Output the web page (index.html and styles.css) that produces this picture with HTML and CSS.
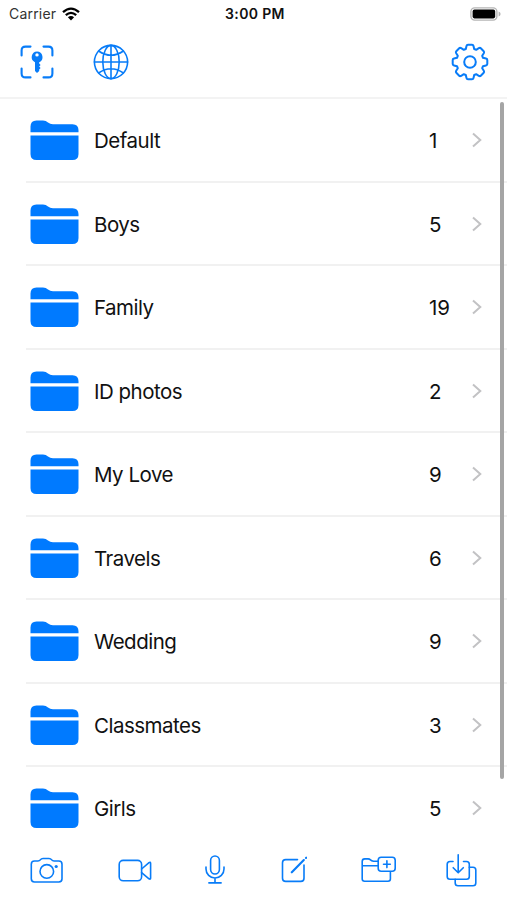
FILE: index.html
```html
<!DOCTYPE html>
<html lang="en">
<head>
<title>Folders</title>
	<meta charset="utf-8">
	<meta name="viewport" content="width=device-width, initial-scale=1.0">
	<link rel="stylesheet" href="styles.css">
</head>

<body>
<svg class="defs" width="0" height="0">
	<symbol id="folder" viewBox="0 0 49 40">
		<path d="M.5 12.3V6.5Q.5 .5 6.5 .5H13Q16 .5 18 2.5Q20 4.2 23 4.2H42.5Q48.5 4.2 48.5 10.2V12.3Z"/>
		<path d="M.5 15.5H48.5V34Q48.5 40 42.5 40H6.5Q.5 40 .5 34Z"/>
	</symbol>
	<symbol id="arrow" viewBox="0 0 10 16">
		<path d="M1 1.5L8.3 8L1 14.5"/>
	</symbol>
</svg>
<div class="wrapper">
	<div class="status">
		<div class="carrier">
			<span>Carrier</span>
			<svg width="18" height="14" viewBox="0 0 18 14">
				<path class="wave" d="M1 5.2Q9 -2 17 5.2M3.8 8.2Q9 3.6 14.2 8.2"/>
				<path d="M9 13.4L5.9 10.3Q9 7.9 12.1 10.3Z"/>
			</svg>
		</div>
		<div class="time">3:00 PM</div>
		<svg class="battery" width="31" height="14" viewBox="0 0 31 14">
			<rect class="case" x=".9" y=".9" width="26" height="12.2" rx="3.8"/>
			<rect x="2.6" y="2.6" width="22.6" height="8.8" rx="1.8"/>
			<path class="cap" d="M28.6 4.6Q30.6 5.4 30.6 7T28.6 9.4Z"/>
		</svg>
	</div>

	<header id="header">
		<svg class="icon" width="34" height="34" viewBox="0 0 34 34">
			<path class="thick" d="M1.6 10.5V5.5Q1.6 1.6 5.5 1.6H10.5M23.5 1.6H28.5Q32.4 1.6 32.4 5.5V10.5M32.4 23.5V28.5Q32.4 32.4 28.5 32.4H23.5M10.5 32.4H5.5Q1.6 32.4 1.6 28.5V23.5"/>
			<path class="fill" fill-rule="evenodd" d="M17 6.5A5.6 5.6 0 0 1 19.2 17.2V18.6L20.6 20L19.2 21.4L20.6 23L19.2 24.6V26L17 28L15 26V17.2A5.6 5.6 0 0 1 17 6.5ZM17 8.2A1.7 1.7 0 1 0 17 11.6A1.7 1.7 0 1 0 17 8.2Z"/>
		</svg>
		<svg class="icon globe" width="36" height="36" viewBox="0 0 36 36">
			<circle cx="18" cy="18" r="16.6"/>
			<ellipse cx="18" cy="18" rx="8.2" ry="16.6"/>
			<path d="M18 1.4V34.6M1.4 18H34.6M5.6 7Q18 15.5 30.4 7M5.6 29Q18 20.5 30.4 29"/>
		</svg>
		<svg class="icon gear" width="38" height="38" viewBox="-19 -19 38 38">
			<path d="M-4.2 -13L-3.5 -16Q-3.2 -17.3 -2 -17.3H2Q3.2 -17.3 3.5 -16L4.2 -13L6.2 -12.2L8.8 -13.8Q10 -14.5 10.8 -13.7L13.7 -10.8Q14.5 -10 13.8 -8.8L12.2 -6.2L13 -4.2L16 -3.5Q17.3 -3.2 17.3 -2V2Q17.3 3.2 16 3.5L13 4.2L12.2 6.2L13.8 8.8Q14.5 10 13.7 10.8L10.8 13.7Q10 14.5 8.8 13.8L6.2 12.2L4.2 13L3.5 16Q3.2 17.3 2 17.3H-2Q-3.2 17.3 -3.5 16L-4.2 13L-6.2 12.2L-8.8 13.8Q-10 14.5 -10.8 13.7L-13.7 10.8Q-14.5 10 -13.8 8.8L-12.2 6.2L-13 4.2L-16 3.5Q-17.3 3.2 -17.3 2V-2Q-17.3 -3.2 -16 -3.5L-13 -4.2L-12.2 -6.2L-13.8 -8.8Q-14.5 -10 -13.7 -10.8L-10.8 -13.7Q-10 -14.5 -8.8 -13.8L-6.2 -12.2Z"/>
			<circle cx="0" cy="0" r="5.8"/>
		</svg>
	</header>

	<main id="list">
		<ul>
			<li><svg class="folder"><use href="#folder"/></svg><span class="name">Default</span><span class="count">1</span><svg class="arrow"><use href="#arrow"/></svg></li>
			<li><svg class="folder"><use href="#folder"/></svg><span class="name">Boys</span><span class="count">5</span><svg class="arrow"><use href="#arrow"/></svg></li>
			<li><svg class="folder"><use href="#folder"/></svg><span class="name">Family</span><span class="count">19</span><svg class="arrow"><use href="#arrow"/></svg></li>
			<li><svg class="folder"><use href="#folder"/></svg><span class="name">ID photos</span><span class="count">2</span><svg class="arrow"><use href="#arrow"/></svg></li>
			<li><svg class="folder"><use href="#folder"/></svg><span class="name">My Love</span><span class="count">9</span><svg class="arrow"><use href="#arrow"/></svg></li>
			<li><svg class="folder"><use href="#folder"/></svg><span class="name">Travels</span><span class="count">6</span><svg class="arrow"><use href="#arrow"/></svg></li>
			<li><svg class="folder"><use href="#folder"/></svg><span class="name">Wedding</span><span class="count">9</span><svg class="arrow"><use href="#arrow"/></svg></li>
			<li><svg class="folder"><use href="#folder"/></svg><span class="name">Classmates</span><span class="count">3</span><svg class="arrow"><use href="#arrow"/></svg></li>
			<li><svg class="folder"><use href="#folder"/></svg><span class="name">Girls</span><span class="count">5</span><svg class="arrow"><use href="#arrow"/></svg></li>
		</ul>
		<div class="scrollbar"></div>
	</main>

	<footer id="footer">
		<!-- camera -->
		<svg class="icon" width="34" height="36" viewBox="0 0 34 36">
			<path d="M4.5 8H8Q9.5 8 10.3 6.9Q11.3 5.5 13 5.5H19Q20.7 5.5 21.7 6.9Q22.5 8 24 8H28.8Q32 8 32 11.2V25.8Q32 29 28.8 29H4.5Q1.3 29 1.3 25.8V11.2Q1.3 8 4.5 8"/>
			<circle cx="16.8" cy="18.4" r="6.8"/>
			<circle class="fill" cx="26.2" cy="13.5" r="1.6"/>
		</svg>
		<!-- video -->
		<svg class="icon" width="35" height="36" viewBox="-1 0 35 36">
			<rect x="1.2" y="7.4" width="22.4" height="20.4" rx="4"/>
			<path d="M23.6 16L31 9.6Q32.6 8.6 32.6 10.4V25.1Q32.6 26.8 31 25.8L23.6 19.6"/>
		</svg>
		<!-- microphone -->
		<svg class="icon" width="21" height="36" viewBox="1 0 21 36">
			<rect x="6.6" y="3" width="8.8" height="18" rx="4.4"/>
			<path d="M2 14V16A9 9 0 0 0 20 16V14M11 25V29.8M4.9 29.9H17.1"/>
		</svg>
		<!-- note -->
		<svg class="icon" width="28" height="36" viewBox="0 0 28 36">
			<path d="M18.5 6.6H6.7Q3.5 6.6 3.5 9.8V25.2Q3.5 28.4 6.7 28.4H21.8Q25 28.4 25 25.2V12"/>
			<path class="thick" d="M12.8 19.3L24.8 7M27 4.9L27.2 4.7"/>
		</svg>
		<!-- new folder -->
		<svg class="icon" width="36" height="36" viewBox="0 0 36 36">
			<path d="M2.2 26V8.5Q2.2 5.9 4.8 5.9H8Q9.5 5.9 10.5 6.8T13.5 8.2H18M2.2 12.8H18M2.2 26Q2.2 28.2 4.6 28.2H28Q30.4 28.2 30.4 26V19.2"/>
			<rect x="18.2" y="4.2" width="17" height="14" rx="3"/>
			<path d="M26.9 7.8V14.6M23.5 11.2H30.3"/>
		</svg>
		<!-- import -->
		<svg class="icon import" width="32" height="36" viewBox="0 0 32 36">
			<path d="M7 8.5H4Q1.2 8.5 1.2 11.3V23.5Q1.2 26.3 4 26.3H20.5Q23.3 26.3 23.3 23.5V11.3Q23.3 8.5 20.5 8.5H17.5M12.2 1.8V19.8M7.2 14.7L12.2 19.8L17.3 14.7"/>
			<path d="M23.3 14.2H27Q29.8 14.2 29.8 17V30Q29.8 32.8 27 32.8H12Q9.2 32.8 9.2 30V26.3"/>
		</svg>
	</footer>
</div>
</body>
</html>
```

FILE: styles.css
```css
body, ul {
	margin: 0;
	padding: 0;
}
ul {
	list-style: none;
}
svg {
	display: block;
	flex: none;
}
body {
	background-color: #fff;
	color: #111;
	font-family: Inter, "Liberation Sans", sans-serif;
}
.defs {
	position: absolute;
}
.wrapper {
	display: flex;
	flex-direction: column;
	height: 900px;
	overflow: hidden;
}

/* status bar */
.status {
	display: grid;
	grid-template-columns: 1fr auto 1fr;
	align-items: center;
	height: 27px;
	padding: 0 6px 0 9px;
	font-size: 14px;
}
.status .carrier {
	display: flex;
	align-items: center;
	gap: 6px;
	color: #333;
	letter-spacing: 0.2px;
}
.status .carrier svg {
	fill: #000;
}
.status .wave {
	fill: none;
	stroke: #000;
	stroke-width: 2.3;
}
.status .time {
	font-weight: 600;
	letter-spacing: 0.35px;
}
.status .battery {
	justify-self: end;
}
.status .case {
	fill: none;
	stroke: #b5b5b5;
	stroke-width: 1.4;
}
.status .cap {
	fill: #b5b5b5;
}

/* line icons */
.icon {
	fill: none;
	stroke: #087cf8;
	stroke-width: 1.6;
	stroke-linecap: round;
	stroke-linejoin: round;
}
.icon .thick {
	stroke-width: 2.1;
}
.icon .fill {
	fill: #087cf8;
	stroke: none;
}

#header {
	display: flex;
	align-items: center;
	box-sizing: border-box;
	height: 72px;
	padding: 0 18px 0 20px;
	border-bottom: 2px solid #f3f3f3;
}
#header .globe {
	margin-left: 39px;
}
#header .gear {
	margin-left: auto;
	stroke-width: 2;
}

/* folder list */
#list {
	position: relative;
	height: 738px;
	overflow: hidden;
}
#list li {
	display: flex;
	align-items: center;
	box-sizing: border-box;
	height: 83.5px;
	margin-left: 26px;
	padding: 1px 25px 0 4px;
	border-bottom: 2px solid #f1f1f1;
	font-size: 20.5px;
}
#list .folder {
	width: 49px;
	height: 40px;
	fill: #007aff;
}
#list .name {
	flex: 1;
	margin-left: 15px;
	padding-top: 1px;
	letter-spacing: -0.5px;
}
#list .count {
	width: 43px;
	padding-top: 1px;
	letter-spacing: -0.2px;
}
#list .arrow {
	width: 10px;
	height: 16px;
	fill: none;
	stroke: #c2c2c4;
	stroke-width: 2;
}
#list .scrollbar {
	position: absolute;
	top: 3px;
	right: 3px;
	width: 4px;
	height: 677px;
	border-radius: 2px;
	background-color: #a5a5a5;
}

#footer {
	display: flex;
	gap: 53px;
	height: 63px;
	box-sizing: border-box;
	padding: 16px 29px 0 30px;
}
#footer .import {
	margin-left: -3px;
}
```
